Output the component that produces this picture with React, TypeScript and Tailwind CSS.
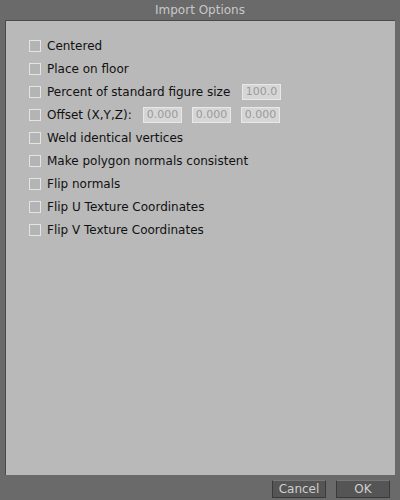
import React from "react";

const options = [
  "Centered",
  "Place on floor",
  "Percent of standard figure size",
  "Offset (X,Y,Z):",
  "Weld identical vertices",
  "Make polygon normals consistent",
  "Flip normals",
  "Flip U Texture Coordinates",
  "Flip V Texture Coordinates",
];

const Field = ({ value }: { value: string }) => (
  <div className="w-[39px] h-[16px] bg-[#d6d6d6] border border-[#e8e8e8] text-[#9a9a9a] text-[11px] leading-[14px] text-center">
    {value}
  </div>
);

export default function App() {
  return (
    <div
      className="w-[400px] h-[500px] bg-[#6a6a6a] flex flex-col"
      style={{ fontFamily: "'DejaVu Sans', sans-serif" }}
    >
      <div className="h-[20px] flex items-center justify-center text-[12px] text-[#c8c8c8]">
        Import Options
      </div>
      <div className="mx-[5px] h-[455px] bg-[#b9b9b9] border-t border-l border-[#4a4a4a] pt-[13px] pl-[23px]">
        {options.map((label, i) => (
          <div key={label} className="h-[23px] flex items-center">
            <div className="w-[12px] h-[12px] border border-[#e4e4e4] bg-[#b4b4b4] mr-[6px]" />
            {i === 2 ? (
              <>
                <span className="w-[195px] text-[12px] text-[#111]">{label}</span>
                <Field value="100.0" />
              </>
            ) : i === 3 ? (
              <>
                <span className="w-[96px] text-[12px] text-[#111]">{label}</span>
                <div className="flex gap-[10px]">
                  <Field value="0.000" />
                  <Field value="0.000" />
                  <Field value="0.000" />
                </div>
              </>
            ) : (
              <span className="text-[12px] text-[#111]">{label}</span>
            )}
          </div>
        ))}
      </div>
      <div className="flex justify-end gap-[10px] pr-[10px] pt-[5px]">
        <button className="w-[54px] h-[18px] bg-[#555] border border-[#3a3a3a] border-t-[#777] text-[12px] text-[#cfcfcf] leading-[16px]">
          Cancel
        </button>
        <button className="w-[54px] h-[18px] bg-[#555] border border-[#3a3a3a] border-t-[#777] text-[12px] text-[#cfcfcf] leading-[16px]">
          OK
        </button>
      </div>
    </div>
  );
}
